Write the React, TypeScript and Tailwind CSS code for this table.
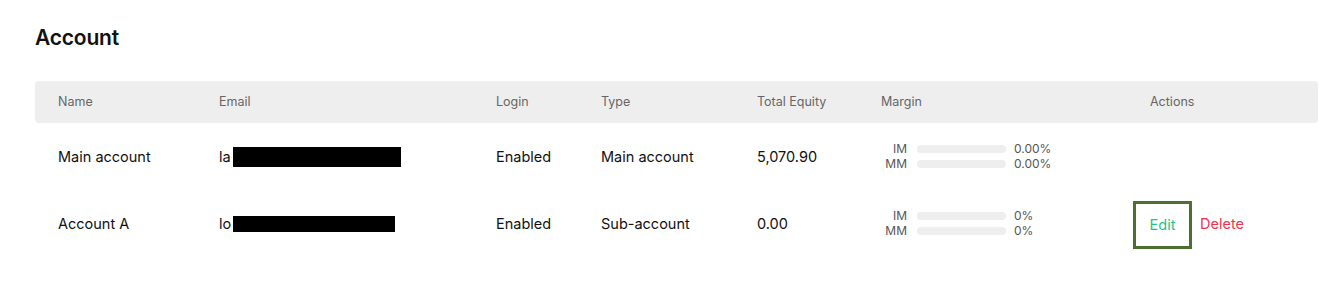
const rows = [
  { name: "Main account", prefix: "la", mask: 168, maskH: 20, login: "Enabled", type: "Main account", equity: "5,070.90", im: "0.00%", mm: "0.00%", actions: false },
  { name: "Account A", prefix: "lo", mask: 162, maskH: 16, login: "Enabled", type: "Sub-account", equity: "0.00", im: "0%", mm: "0%", actions: true },
];

function MarginLine({ label, value }: { label: string; value: string }) {
  return (
    <div className="flex items-center h-[15px]">
      <span className="w-[26px] text-right">{label}</span>
      <span className="ml-[10px] w-[89px] h-[8px] rounded-full bg-[#eeeeee]" />
      <span className="ml-[8px]">{value}</span>
    </div>
  );
}

export default function App() {
  return (
    <div className="bg-white w-[1330px] h-[298px] pl-[35px] pr-[12px] pt-[24px] font-['Inter',sans-serif] text-[#111]">
      <h1 className="text-[21px] font-semibold leading-[28px] tracking-[-0.2px]">Account</h1>

      <div className="mt-[29px]">
        <div className="flex items-center h-[42px] bg-[#eeeeee] rounded-[4px] text-[12.5px] text-[#666]">
          <div className="w-[161px] pl-[23px]">Name</div>
          <div className="w-[277px] pl-[23px]">Email</div>
          <div className="w-[105px] pl-[23px]">Login</div>
          <div className="w-[156px] pl-[23px]">Type</div>
          <div className="w-[124px] pl-[23px]">Total Equity</div>
          <div className="w-[252px] pl-[23px]">Margin</div>
          <div className="flex-1 pl-[40px]">Actions</div>
        </div>

        {rows.map((r) => (
          <div key={r.name} className="flex items-center h-[67px] text-[14.5px]">
            <div className="w-[161px] pl-[23px]">{r.name}</div>
            <div className="w-[277px] pl-[23px] flex items-center">
              <span>{r.prefix}</span>
              <span className="ml-[2px] bg-black" style={{ width: r.mask, height: r.maskH }} />
            </div>
            <div className="w-[105px] pl-[23px]">{r.login}</div>
            <div className="w-[156px] pl-[23px]">{r.type}</div>
            <div className="w-[124px] pl-[23px]">{r.equity}</div>
            <div className="w-[252px] pl-[23px] text-[12px] text-[#555] leading-none">
              <MarginLine label="IM" value={r.im} />
              <MarginLine label="MM" value={r.mm} />
            </div>
            <div className="flex-1 pl-[23px] flex items-center">
              {r.actions && (
                <>
                  <button className="h-[48px] w-[59px] border-[3px] border-[#4d7031] text-[#22c38b] text-[14.5px] mt-[2px]">Edit</button>
                  <button className="ml-[8px] text-[#ee3350] text-[14.5px]">Delete</button>
                </>
              )}
            </div>
          </div>
        ))}
      </div>
    </div>
  );
}
